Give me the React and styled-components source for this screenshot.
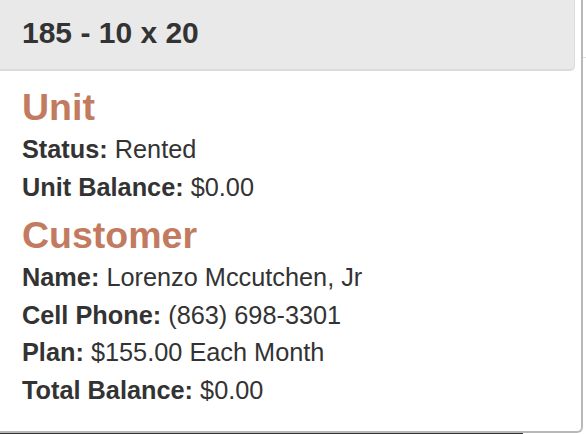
import styled, { createGlobalStyle } from "styled-components";

const GlobalStyle = createGlobalStyle`
  html, body {
    margin: 0;
    padding: 0;
    background: #fff;
    font-family: "Liberation Sans", Arial, sans-serif;
    color: #333;
  }
`;

const Page = styled.div`
  display: flex;
  flex-direction: column;
  width: 586px;
  height: 434px;
  overflow: hidden;
`;

const Row = styled.div`
  display: flex;
`;

const Card = styled.div`
  width: 581px;
  height: 431px;
  border-right: 2px solid #b8b8b8;
  border-bottom: 2px solid #b8b8b8;
  border-bottom-right-radius: 6px;
  background: #fff;
  box-sizing: content-box;
`;

const Edge = styled.div`
  flex: 1;
  margin-top: 57px;
  border-top: 1px solid #dedede;
`;

const Header = styled.div`
  width: 575px;
  height: 71px;
  box-sizing: border-box;
  padding: 16px 22px 0;
  background: #e9e9e9;
  border-bottom: 2px solid #dcdcdc;
  border-right: 1px solid #dcdcdc;
  border-bottom-right-radius: 5px;
  font-size: 30px;
  line-height: 1.1;
  font-weight: bold;
  color: #333;
`;

const Body = styled.div`
  padding: 7px 22px 0;
`;

const Heading = styled.h3`
  margin: 9px 0 3px;
  font-size: 37.5px;
  line-height: 1.1;
  font-weight: bold;
  color: #c27b5f;
`;

const Line = styled.div`
  font-size: 25.3px;
  line-height: 37.4px;
  white-space: nowrap;
`;

const Label = styled.b`
  font-weight: bold;
`;

const Under = styled.div`
  width: 523px;
  height: 1px;
  background: #333;
`;

function Field({ label, value }) {
  return (
    <Line>
      <Label>{label}:</Label> {value}
    </Line>
  );
}

export default function App() {
  return (
    <Page>
      <GlobalStyle />
      <Row>
        <Card>
          <Header>185 - 10 x 20</Header>
          <Body>
            <Heading>Unit</Heading>
            <Field label="Status" value="Rented" />
            <Field label="Unit Balance" value="$0.00" />
            <Heading>Customer</Heading>
            <Field label="Name" value="Lorenzo Mccutchen, Jr" />
            <Field label="Cell Phone" value="(863) 698-3301" />
            <Field label="Plan" value="$155.00 Each Month" />
            <Field label="Total Balance" value="$0.00" />
          </Body>
        </Card>
        <Edge />
      </Row>
      <Under />
    </Page>
  );
}
